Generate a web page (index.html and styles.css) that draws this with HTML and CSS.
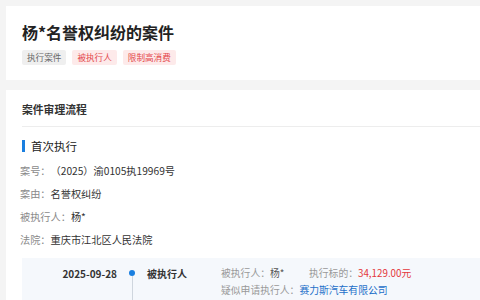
FILE: index.html
```html
<!DOCTYPE html>
<html lang="zh-CN">
<head>
<meta charset="utf-8">
<link rel="stylesheet" href="styles.css">
</head>
<body>
<div class="page">
  <section class="card head-card">
    <h1 class="title">杨*名誉权纠纷的案件</h1>
    <div class="tags">
      <span class="tag tag-gray">执行案件</span>
      <span class="tag tag-red">被执行人</span>
      <span class="tag tag-red">限制高消费</span>
    </div>
  </section>
  <section class="card flow-card">
    <div class="flow-head">案件审理流程</div>
    <div class="stage">
      <div class="stage-title"><span class="bar"></span>首次执行</div>
      <div class="fields">
        <div class="field"><span class="lbl">案号：</span><span class="val">（2025）渝0105执19969号</span></div>
        <div class="field"><span class="lbl">案由：</span><span class="val">名誉权纠纷</span></div>
        <div class="field"><span class="lbl">被执行人：</span><span class="val">杨*</span></div>
        <div class="field"><span class="lbl">法院：</span><span class="val">重庆市江北区人民法院</span></div>
      </div>
      <div class="timeline">
        <div class="tl-date">2025-09-28</div>
        <div class="tl-axis"><span class="dot"></span><span class="line"></span></div>
        <div class="tl-role">被执行人</div>
        <div class="tl-detail">
          <div class="tl-row"><span class="item"><span class="lbl">被执行人：</span><span class="val">杨*</span></span><span class="lbl">执行标的：</span><span class="red">34,129.00元</span></div>
          <div class="tl-row"><span class="lbl">疑似申请执行人：</span><span class="blue">赛力斯汽车有限公司</span></div>
        </div>
      </div>
    </div>
  </section>
</div>
</body>
</html>
```

FILE: styles.css
```css
* { box-sizing: border-box; margin: 0; padding: 0; }
html, body { width: 480px; height: 300px; overflow: hidden; }
body {
  background: #f4f4f4;
  font-family: "Noto Sans CJK SC", "Noto Sans", sans-serif;
  color: #333;
  text-spacing-trim: space-all;
}
.page {
  padding: 6px 0 0 6px;
  display: flex;
  flex-direction: column;
  gap: 10px;
}
.card {
  background: #fff;
  padding-left: 16px;
}
.head-card {
  height: 74px;
  padding-top: 15px;
}
.title {
  font-size: 16px;
  line-height: 22px;
  font-weight: 700;
  color: #222;
}
.tags {
  margin-top: 7px;
  display: flex;
  gap: 6px;
}
.tag {
  font-size: 8.6px;
  line-height: 15px;
  height: 15px;
  padding: 0 5px;
  border-radius: 2px;
}
.tag-gray { background: #efefef; color: #666; }
.tag-red { background: #fdeaea; color: #e4484a; }
.flow-card {
  padding-top: 11px;
  height: 210px;
}
.flow-head {
  font-size: 10.8px;
  line-height: 16px;
  font-weight: 700;
  color: #333;
  padding-bottom: 9px;
  border-bottom: 1px solid #ededed;
}
.stage { padding-top: 11px; }
.stage-title {
  display: flex;
  align-items: center;
  font-size: 11.5px;
  line-height: 16px;
  color: #222;
}
.bar {
  width: 3px;
  height: 12px;
  background: #1a7fe0;
  margin-right: 6px;
}
.fields {
  margin-top: 5px;
  margin-left: -2px;
}
.field {
  font-size: 10.2px;
  line-height: 23px;
}
.lbl { color: #8a8a8a; }
.val { color: #333; }
.timeline {
  margin-top: 7px;
  background: #f5f8fc;
  display: flex;
  padding-top: 7px;
  height: 42px;
}
.tl-date {
  width: 95px;
  text-align: right;
  font-size: 10px;
  font-weight: 700;
  line-height: 17px;
  color: #333;
}
.tl-axis {
  width: 30px;
  display: flex;
  flex-direction: column;
  align-items: center;
  padding-top: 5px;
}
.dot {
  width: 6px;
  height: 6px;
  border-radius: 50%;
  background: #1a7fe0;
}
.line {
  width: 1px;
  flex: 1;
  background: #cfd6de;
}
.tl-role {
  width: 74px;
  font-size: 10px;
  font-weight: 700;
  line-height: 17px;
  color: #333;
}
.tl-detail { font-size: 9.8px; line-height: 17px; }
.tl-row { white-space: nowrap; }
.item { display: inline-block; width: 88px; }
.tl-detail .lbl { color: #999; }
.tl-detail .val { color: #555; }
.red { color: #e4393c; }
.blue { color: #1c6fc9; }
```
